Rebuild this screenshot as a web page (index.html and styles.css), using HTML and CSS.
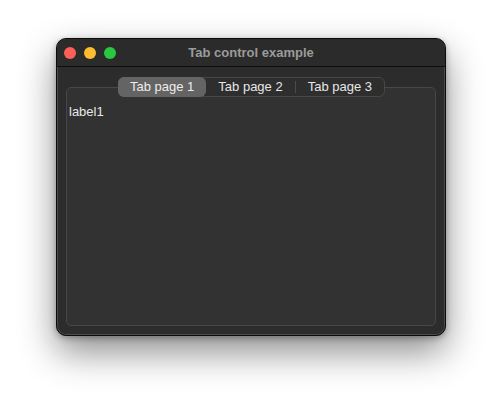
FILE: index.html
```html
<!DOCTYPE html>
<html>
<head>
<meta charset="utf-8">
<link rel="stylesheet" href="styles.css">
</head>
<body>
<div class="window">
  <div class="titlebar">
    <div class="lights">
      <span class="light red"></span>
      <span class="light yellow"></span>
      <span class="light green"></span>
    </div>
    <div class="title">Tab control example</div>
    <div></div>
  </div>
  <div class="content">
    <div class="tabs">
      <div class="tab selected">Tab page 1</div>
      <div class="tab">Tab page 2</div>
      <div class="sep"></div>
      <div class="tab">Tab page 3</div>
    </div>
    <div class="group">
      <div class="label">label1</div>
    </div>
  </div>
</div>
</body>
</html>
```
FILE: styles.css
```css
html, body {
  margin: 0;
  padding: 0;
  background: #ffffff;
}
html {
  min-height: 100%;
  height: 410px;
}
body {
  box-sizing: border-box;
  height: 410px;
  font-family: "Liberation Sans", Arial, sans-serif;
  font-size: 13px;
  padding: 38px 0 0 56px;
}
.window {
  box-sizing: border-box;
  width: 390px;
  height: 298px;
  background: #2c2c2c;
  border: 1px solid #0c0c0c;
  border-radius: 10px;
  box-shadow: inset 0 0 0 1px #4a4a4a, 0 16px 36px rgba(0, 0, 0, 0.45), 0 2px 6px rgba(0, 0, 0, 0.3);
  display: flex;
  flex-direction: column;
  overflow: hidden;
}
.titlebar {
  height: 27px;
  display: grid;
  grid-template-columns: 1fr auto 1fr;
  align-items: center;
  border-bottom: 1px solid #0e0e0e;
  background: #2b2b2b;
}
.lights {
  display: flex;
  gap: 8px;
  padding-left: 7px;
}
.light {
  width: 12px;
  height: 12px;
  border-radius: 50%;
}
.red { background: #fe5f57; }
.yellow { background: #febc2e; }
.green { background: #28c840; }
.title {
  color: #9b9b9b;
  font-weight: bold;
  font-size: 13px;
  line-height: 25px;
}
.content {
  flex: 1;
  display: flex;
  flex-direction: column;
  align-items: center;
  padding: 10px 9px 9px 9px;
}
.tabs {
  position: relative;
  z-index: 1;
  box-sizing: border-box;
  height: 20px;
  display: flex;
  align-items: center;
  background: #2e2e2e;
  border: 1px solid #474747;
  border-radius: 6px;
  color: #e6e6e6;
  margin-left: 1px;
}
.tab {
  box-sizing: border-box;
  height: 20px;
  margin: -1px 0;
  padding: 0 12px;
  line-height: 19px;
  white-space: nowrap;
}
.tab.selected {
  background: #646464;
  border-radius: 6px;
  margin-left: -1px;
  color: #ededed;
}
.sep {
  width: 1px;
  height: 12px;
  background: #4c4c4c;
}
.group {
  align-self: stretch;
  flex: 1;
  margin-top: -10px;
  background: #323232;
  border: 1px solid #474747;
  border-radius: 5px;
  padding: 16px 2px;
}
.label {
  color: #e8e8e8;
  line-height: 16px;
}
```
